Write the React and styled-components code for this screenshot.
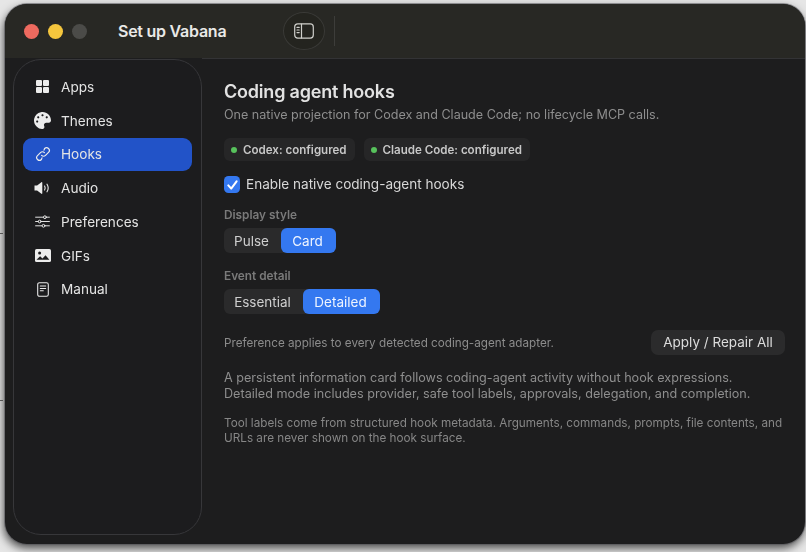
import React from "react";
import styled, { createGlobalStyle } from "styled-components";
import { FaPalette } from "react-icons/fa";

const Global = createGlobalStyle`
  html, body { margin: 0; height: 100%; background: #e6e6e6; overflow: hidden; }
  body { font-family: Inter, "Noto Sans", "Liberation Sans", sans-serif; -webkit-font-smoothing: antialiased; }
  * { box-sizing: border-box; }
`;

const Page = styled.div`
  width: 806px;
  height: 552px;
  padding: 4px 1px 8px 5px;
  position: relative;
  filter: blur(0.45px);
`;
const Tick = styled.i`
  position: absolute;
  left: 0;
  top: ${p => p.$top}px;
  width: 3px;
  height: 1px;
  background: #555;
`;
const Win = styled.div`
  height: 100%;
  border-radius: 22px;
  background: #1d1d1e;
  box-shadow: 0 0 0 1px #55555a88, -1px 4px 10px rgba(0, 0, 0, 0.7);
  display: flex;
  flex-direction: column;
  overflow: hidden;
`;
const TitleBar = styled.header`
  height: 54px;
  flex: none;
  background: #282824;
  display: flex;
  align-items: center;
  padding-left: 19px;
`;
const Light = styled.span`
  width: 15px;
  height: 15px;
  border-radius: 50%;
  margin-right: 9px;
  background: ${p => p.$c};
`;
const WinTitle = styled.h1`
  margin: 0 0 0 22px;
  width: 165px;
  font-size: 16px;
  font-weight: 600;
  color: #e9e9e7;
  letter-spacing: -0.25px;
`;
const ToggleBtn = styled.button`
  width: 42px;
  height: 38px;
  border-radius: 50%;
  border: 1px solid #3a3a37;
  background: #24241f;
  padding: 0;
  display: grid;
  place-items: center;
`;
const Divider = styled.span`
  width: 1px;
  height: 30px;
  margin-left: 9px;
  background: #3d3d3a;
`;
const Body = styled.div`
  flex: 1;
  display: flex;
  min-height: 0;
`;
const Side = styled.nav`
  width: 189px;
  margin: 1px 0 9px 8px;
  flex: none;
  border: 1px solid #37373a;
  border-radius: 28px;
  background: #1c1c1e;
  padding: 10px 9px;
  display: flex;
  flex-direction: column;
`;
const Item = styled.div`
  height: 33.75px;
  flex: none;
  display: flex;
  align-items: center;
  padding-left: 12px;
  gap: 9px;
  border-radius: 9px;
  font-size: 13.6px;
  color: #e4e4e4;
  background: ${p => (p.$active ? "#2253c8" : "transparent")};
`;
const IconBox = styled.span`
  width: 17px;
  height: 17px;
  margin-left: -1px;
  margin-right: 1px;
  display: grid;
  place-items: center;
  color: #ececec;
`;
const Main = styled.main`
  flex: 1;
  min-width: 0;
  border-top: 1px solid #333335;
  padding: 22px 20px 0 22px;
`;
const Heading = styled.h2`
  margin: 0;
  font-size: 18px;
  line-height: 22px;
  font-weight: 600;
  letter-spacing: -0.2px;
  color: #e2e2e2;
`;
const Sub = styled.p`
  margin: 3px 0 0;
  font-size: 12.55px;
  line-height: 18px;
  color: #8e8e8e;
`;
const Chips = styled.div`
  display: flex;
  gap: 9px;
  margin-top: 14px;
`;
const Chip = styled.span`
  height: 23px;
  padding: 0 8px 0 7px;
  border-radius: 6px;
  background: #262627;
  display: flex;
  align-items: center;
  gap: 6px;
  font-size: 11.55px;
  font-weight: 600;
  color: #c8c8c8;
`;
const Dot = styled.i`
  width: 6px;
  height: 6px;
  border-radius: 50%;
  background: #57c25c;
`;
const CheckRow = styled.label`
  display: flex;
  align-items: center;
  gap: 6px;
  margin-top: 15px;
  font-size: 13.55px;
  line-height: 17px;
  color: #d8d8d8;
`;
const CheckBox = styled.span`
  width: 16px;
  height: 17px;
  border-radius: 4.5px;
  background: #3478f0;
  display: grid;
  place-items: center;
`;
const FieldLabel = styled.div`
  margin-top: ${p => p.$mt}px;
  font-size: 11.8px;
  line-height: 14px;
  font-weight: 600;
  color: #7a7a7a;
`;
const Segments = styled.div`
  display: inline-flex;
  margin-top: 6.5px;
  height: 25px;
  border-radius: 6px;
  background: #2a2a2b;
  vertical-align: top;
`;
const Segment = styled.span`
  width: ${p => p.$w}px;
  padding-right: 2px;
  border-radius: 6px;
  display: grid;
  place-items: center;
  font-size: 13.5px;
  color: ${p => (p.$on ? "#eef4ff" : "#cfcfcf")};
  background: ${p => (p.$on ? "#3478f0" : "transparent")};
`;
const ApplyRow = styled.div`
  display: flex;
  align-items: center;
  justify-content: space-between;
  margin-top: 16px;
  font-size: 11.7px;
  color: #8c8c8c;
`;
const ApplyBtn = styled.button`
  width: 134px;
  height: 25px;
  padding: 0 0 1px;
  border: 0;
  border-radius: 7px;
  background: #2b2b2c;
  color: #dcdcdc;
  font: 400 13.5px Inter, sans-serif;
`;
const Para = styled.p`
  margin: 15px 0 0;
  font-size: 12.62px;
  line-height: 16px;
  color: #8e8e8e;
`;
const Small = styled.p`
  margin: 14px 0 0;
  font-size: 11.72px;
  line-height: 15px;
  color: #868686;
`;

const AppsIcon = () => (
  <svg width="13" height="13" viewBox="0 0 13 13" fill="currentColor">
    <rect x="0" y="0" width="6" height="6" rx="1.1" />
    <rect x="7" y="0" width="6" height="6" rx="1.1" />
    <rect x="0" y="7" width="6" height="6" rx="1.1" />
    <rect x="7" y="7" width="6" height="6" rx="1.1" />
  </svg>
);
const LinkIcon = () => (
  <svg width="16" height="16" viewBox="0 0 16 16" fill="none" stroke="currentColor" strokeWidth="1.2" strokeLinecap="round" strokeLinejoin="round">
    <path d="M6.6 9.4a2.7 2.7 0 0 0 3.9 0l3-3a2.75 2.75 0 0 0-3.9-3.9L9 4.1" />
    <path d="M9.4 6.6a2.7 2.7 0 0 0-3.9 0l-3 3a2.75 2.75 0 0 0 3.9 3.9L7 11.9" />
  </svg>
);
const AudioIcon = () => (
  <svg width="17" height="14" viewBox="0 0 17 14" fill="none">
    <path d="M0.5 4.5h2.6L7.4 1.2c.4-.3.9 0 .9.5v10.6c0 .5-.5.8-.9.5L3.1 9.5H0.5z" fill="currentColor" />
    <path d="M10.6 5c.7 1.2.7 2.8 0 4M13 3.2c1.4 2.2 1.4 5.4 0 7.6" stroke="currentColor" strokeWidth="1.1" strokeLinecap="round" />
  </svg>
);
const SlidersIcon = () => (
  <svg width="15" height="13" viewBox="0 0 15 13" fill="none" stroke="currentColor" strokeWidth="0.95" strokeLinecap="round">
    <path d="M0.6 2.2h7.8M11.4 2.2h3M0.6 6.5h2.6M6.2 6.5h8.2M0.6 10.8h6.4M10 10.8h4.4" />
    <circle cx="9.9" cy="2.2" r="1.4" />
    <circle cx="4.7" cy="6.5" r="1.4" />
    <circle cx="8.5" cy="10.8" r="1.4" />
  </svg>
);
const PhotoIcon = () => (
  <svg width="16" height="13" viewBox="0 0 16 13">
    <rect x="0" y="0" width="16" height="13" rx="1.6" fill="currentColor" />
    <path d="M1.5 10.8l3.6-3.6 2.4 2.2 3-3.2 3.9 4.6z" fill="#1c1c1e" />
    <circle cx="4.6" cy="3.9" r="1.5" fill="#1c1c1e" />
  </svg>
);
const BookIcon = () => (
  <svg width="12" height="15" viewBox="0 0 12 15" fill="none" stroke="currentColor" strokeWidth="1.05" strokeLinecap="round">
    <rect x="0.7" y="0.7" width="10.6" height="13.6" rx="1.8" />
    <path d="M3.3 4h5.4M3.3 6.4h5.4M3.3 8.8h3" />
  </svg>
);
const PanelIcon = () => (
  <svg width="20" height="16" viewBox="0 0 20 16" fill="none" stroke="#cfcfcb" strokeWidth="1.2" strokeLinecap="round">
    <rect x="0.7" y="0.9" width="18.6" height="14.2" rx="3" />
    <path d="M7.5 1v14M3 4.4h2.2M3 7h2.2M3 9.6h2.2" />
  </svg>
);
const Tickmark = () => (
  <svg width="11" height="10" viewBox="0 0 11 10" fill="none" stroke="#fff" strokeWidth="2" strokeLinecap="round" strokeLinejoin="round">
    <path d="M1.3 5.4l2.9 3.2 5.4-7.3" />
  </svg>
);

const nav = [
  ["Apps", <AppsIcon />],
  ["Themes", <FaPalette size={17} />],
  ["Hooks", <LinkIcon />, true],
  ["Audio", <AudioIcon />],
  ["Preferences", <SlidersIcon />],
  ["GIFs", <PhotoIcon />],
  ["Manual", <BookIcon />],
];

export default function App() {
  return (
    <Page>
      <Global />
      <Tick $top={233} />
      <Tick $top={400} />
      <Win>
        <TitleBar>
          <Light $c="#ee6a5f" />
          <Light $c="#f5c63d" />
          <Light $c="#4b4b48" />
          <WinTitle>Set up Vabana</WinTitle>
          <ToggleBtn aria-label="Toggle sidebar"><PanelIcon /></ToggleBtn>
          <Divider />
        </TitleBar>
        <Body>
          <Side>
            {nav.map(([label, icon, active]) => (
              <Item key={label} $active={active}>
                <IconBox>{icon}</IconBox>
                {label}
              </Item>
            ))}
          </Side>
          <Main>
            <Heading>Coding agent hooks</Heading>
            <Sub>One native projection for Codex and Claude Code; no lifecycle MCP calls.</Sub>
            <Chips>
              <Chip><Dot />Codex: configured</Chip>
              <Chip><Dot />Claude Code: configured</Chip>
            </Chips>
            <CheckRow>
              <CheckBox><Tickmark /></CheckBox>
              Enable native coding-agent hooks
            </CheckRow>
            <FieldLabel $mt={14.5}>Display style</FieldLabel>
            <Segments>
              <Segment $w={57}>Pulse</Segment>
              <Segment $w={55} $on>Card</Segment>
            </Segments>
            <FieldLabel $mt={15.5}>Event detail</FieldLabel>
            <Segments>
              <Segment $w={79}>Essential</Segment>
              <Segment $w={77} $on>Detailed</Segment>
            </Segments>
            <ApplyRow>
              Preference applies to every detected coding-agent adapter.
              <ApplyBtn>Apply / Repair All</ApplyBtn>
            </ApplyRow>
            <Para>
              A persistent information card follows coding-agent activity without hook expressions.<br />
              Detailed mode includes provider, safe tool labels, approvals, delegation, and completion.
            </Para>
            <Small>
              Tool labels come from structured hook metadata. Arguments, commands, prompts, file contents, and<br />
              URLs are never shown on the hook surface.
            </Small>
          </Main>
        </Body>
      </Win>
    </Page>
  );
}
